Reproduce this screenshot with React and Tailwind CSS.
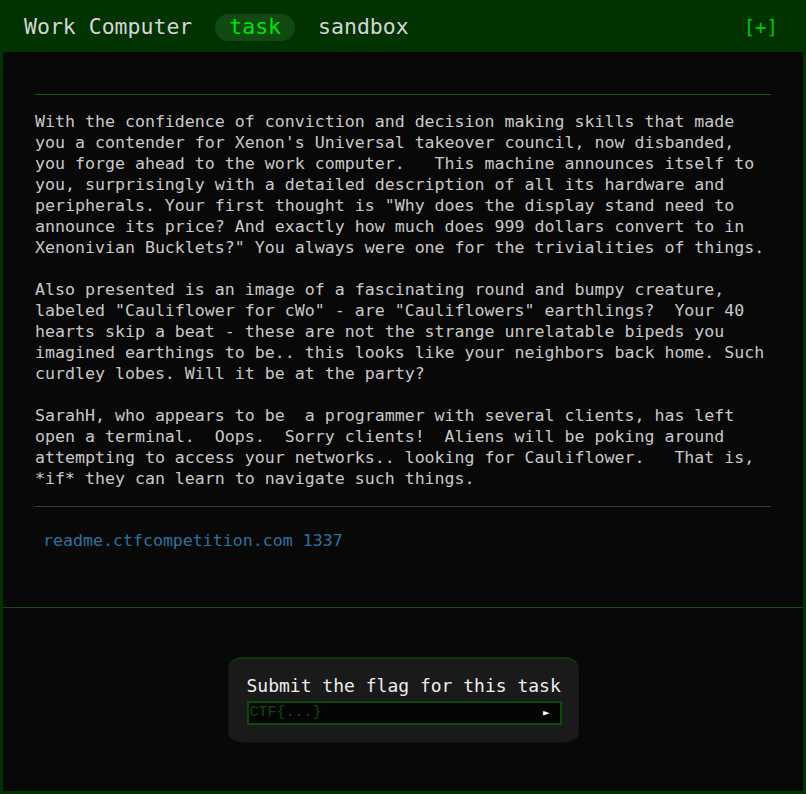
import React, { useState } from "react";

const mono = "font-['DejaVu_Sans_Mono','Liberation_Mono',monospace]";

const paragraphs = [
  [
    "With the confidence of conviction and decision making skills that made",
    "you a contender for Xenon's Universal takeover council, now disbanded,",
    "you forge ahead to the work computer.   This machine announces itself to",
    "you, surprisingly with a detailed description of all its hardware and",
    'peripherals. Your first thought is "Why does the display stand need to',
    "announce its price? And exactly how much does 999 dollars convert to in",
    'Xenonivian Bucklets?" You always were one for the trivialities of things.',
  ],
  [
    "Also presented is an image of a fascinating round and bumpy creature,",
    'labeled "Cauliflower for cWo" - are "Cauliflowers" earthlings?  Your 40',
    "hearts skip a beat - these are not the strange unrelatable bipeds you",
    "imagined earthings to be.. this looks like your neighbors back home. Such",
    "curdley lobes. Will it be at the party?",
  ],
  [
    "SarahH, who appears to be  a programmer with several clients, has left",
    "open a terminal.  Oops.  Sorry clients!  Aliens will be poking around",
    "attempting to access your networks.. looking for Cauliflower.   That is,",
    "*if* they can learn to navigate such things.",
  ],
];

const App = () => {
  const [flag, setFlag] = useState("");

  return (
    <div className={`${mono} w-[806px] h-[794px] bg-[#003300] flex flex-col`}>
      {/* top bar */}
      <div className="h-[52px] flex items-center pt-[3px] pl-6 pr-7 text-[21.5px] text-[#d4d4d4]">
        <span>Work Computer</span>
        <span className="ml-[23px] h-[27px] px-[14px] rounded-full bg-[#104a10] text-[#00e400] flex items-center">
          task
        </span>
        <span className="ml-[23px]">sandbox</span>
        <span className="ml-auto text-[#00c800] text-[19px]">[+]</span>
      </div>

      <div className="flex-1 mx-[3px] mb-[3px] bg-[#080808] flex flex-col">
        <div className="px-8 pt-[42px] pb-[56px] border-b border-[#1b4a1b]">
          <div className="border-t border-[#0c5e0c]" />
          <div className="mt-[16px] text-[16.6px] leading-[21px] text-[#c8c8c8] whitespace-pre flex flex-col gap-[21px]">
            {paragraphs.map((lines, i) => (
              <p key={i}>{lines.join("\n")}</p>
            ))}
          </div>
          <div className="mt-[17px] border-t border-[#2c452c]" />
          <a
            href="#"
            className="block mt-[23px] ml-2 text-[16.6px] leading-[21px] text-[#2b729e]"
          >
            readme.ctfcompetition.com 1337
          </a>
        </div>

        <div className="flex justify-center pt-[49px]">
          <div className="w-[351px] h-[86px] bg-[#1a1a1a] rounded-[16px/10px] border-t-2 border-x border-b border-t-[#0b3a0b] border-x-[#101a10] border-b-[#111111] px-[18px] pt-[14px]">
            <p className="text-[18px] leading-[26px] text-[#eeeeee] whitespace-nowrap">Submit the flag for this task</p>
            <div className="mt-[2px] h-[24px] w-[315px] border-2 border-[#0b4a0b] bg-[#050505] flex items-center pl-[1px] pr-[10px]">
              <input
                value={flag}
                onChange={(e) => setFlag(e.target.value)}
                placeholder="CTF{...}"
                className="flex-1 min-w-0 bg-transparent outline-none text-[15px] text-[#2a8a2a] placeholder:text-[#0d4a0d] font-['Liberation_Mono',monospace]"
              />
              <span className="text-[11px] text-white">►</span>
            </div>
          </div>
        </div>
      </div>
    </div>
  );
};

export default App;
